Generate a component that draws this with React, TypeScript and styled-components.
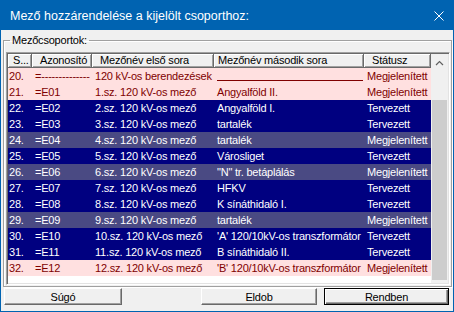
import styled, { createGlobalStyle } from 'styled-components'

const GlobalStyle = createGlobalStyle`
  html, body {
    margin: 0;
    padding: 0;
  }
  body {
    width: 454px;
    height: 312px;
    overflow: hidden;
    background: #f0f0f0;
  }
`

const StyledWindow = styled.div`
  width: 454px;
  height: 312px;
  box-sizing: border-box;
  border: 1px solid #0063b1;
  background: #f0f0f0;
  display: flex;
  flex-direction: column;
  font-family: 'Liberation Sans', Arial, sans-serif;
  font-size: 11px;
  letter-spacing: -0.2px;
  color: #000;
`
const StyledTitleBar = styled.div`
  height: 29px;
  flex: none;
  background: #0063b1;
  color: #fff;
  display: flex;
  align-items: center;
  justify-content: space-between;
  padding: 0 9px 0 9px;
  font-size: 12.5px;
  letter-spacing: 0;
`
const StyledClose = styled.svg`
  width: 10px;
  height: 10px;
`
const StyledGroup = styled.fieldset`
  margin: 4px 1px 0 2px;
  padding: 5px 1px 1px 2px;
  border: 1px solid #a0a0a0;
  box-shadow: inset 1px 1px #fff, 1px 1px #fff;
  min-width: 0;
`
const StyledLegend = styled.legend`
  margin-left: 4px;
  padding: 0 2px;
  line-height: 13px;
`
const StyledList = styled.div`
  height: 233px;
  box-sizing: border-box;
  border-style: solid;
  border-width: 1px;
  border-color: #a0a0a0 #fff #fff #a0a0a0;
  box-shadow: inset 1px 1px #696969, inset -1px -1px #e3e3e3;
  padding: 1px;
  display: flex;
  background: #fff;
`
const StyledTable = styled.div`
  width: 423px;
  display: flex;
  flex-direction: column;
`
const StyledRow = styled.div`
  display: grid;
  grid-template-columns: 24px 60px 122px 150px 67px;
  height: 16px;
  line-height: 16px;
`
const StyledHeaderRow = styled(StyledRow)`
  height: 14px;
  line-height: 13px;
`
const StyledHead = styled.div<{ $pad: number }>`
  box-sizing: border-box;
  padding-left: ${({ $pad }) => $pad}px;
  background: #f0f0f0;
  border-right: 1px solid #696969;
  border-bottom: 1px solid #696969;
  box-shadow: inset 1px 1px #fff, inset -1px -1px #a0a0a0;
  white-space: nowrap;
  overflow: hidden;
`
const tones = {
  pink: { bg: '#ffe0e0', fg: '#800000' },
  navy: { bg: '#000080', fg: '#ffffff' },
  slate: { bg: '#4a4a83', fg: '#ffffff' },
}
type Tone = keyof typeof tones

const StyledDataRow = styled(StyledRow)<{ $tone: Tone }>`
  background: ${({ $tone }) => tones[$tone].bg};
  color: ${({ $tone }) => tones[$tone].fg};
`
const StyledCell = styled.div<{ $first?: boolean }>`
  padding-left: ${({ $first }) => ($first ? 1 : 3)}px;
  white-space: nowrap;
  overflow: hidden;
`
const StyledRule = styled.div`
  height: 12px;
  margin-right: 1px;
  border-bottom: 1px solid currentColor;
`
const StyledScroll = styled.div`
  width: 17px;
  display: flex;
  flex-direction: column;
  background: #f0f0f0;
`
const StyledArrow = styled.div`
  height: 17px;
  display: flex;
  align-items: center;
  justify-content: center;
`
const StyledTrack = styled.div`
  height: 29px;
`
const StyledThumb = styled.div`
  flex: 1;
  margin: 0 1px 3px 1px;
  background: #cdcdcd;
`
const StyledButtons = styled.div`
  display: flex;
  gap: 7px;
  margin: 1px 4px 0 3px;
`
const StyledButton = styled.button<{ $width: number; $default?: boolean }>`
  width: ${({ $width }) => $width}px;
  height: 17px;
  padding: 0;
  box-sizing: border-box;
  font: inherit;
  letter-spacing: inherit;
  color: #000;
  background: #f0f0f0;
  border-style: solid;
  border-width: 1px;
  border-color: ${({ $default }) =>
    $default ? '#000' : '#fff #696969 #696969 #fff'};
  box-shadow: ${({ $default }) =>
    $default
      ? 'inset 1px 1px #fff, inset -1px -1px #696969, inset -2px -2px #a0a0a0'
      : 'inset -1px -1px #a0a0a0'};
  &:first-child {
    margin-right: auto;
  }
`

const rows: [string, string, string, string | null, string, Tone][] = [
  ['20.', '=--------------', '120 kV-os berendezések', null, 'Megjelenített', 'pink'],
  ['21.', '=E01', '1.sz. 120 kV-os mező', 'Angyalföld II.', 'Megjelenített', 'pink'],
  ['22.', '=E02', '2.sz. 120 kV-os mező', 'Angyalföld I.', 'Tervezett', 'navy'],
  ['23.', '=E03', '3.sz. 120 kV-os mező', 'tartalék', 'Tervezett', 'navy'],
  ['24.', '=E04', '4.sz. 120 kV-os mező', 'tartalék', 'Megjelenített', 'slate'],
  ['25.', '=E05', '5.sz. 120 kV-os mező', 'Városliget', 'Tervezett', 'navy'],
  ['26.', '=E06', '6.sz. 120 kV-os mező', '"N" tr. betáplálás', 'Megjelenített', 'slate'],
  ['27.', '=E07', '7.sz. 120 kV-os mező', 'HFKV', 'Tervezett', 'navy'],
  ['28.', '=E08', '8.sz. 120 kV-os mező', 'K sínáthidaló I.', 'Tervezett', 'navy'],
  ['29.', '=E09', '9.sz. 120 kV-os mező', 'tartalék', 'Megjelenített', 'slate'],
  ['30.', '=E10', '10.sz. 120 kV-os mező', "'A' 120/10kV-os transzformátor", 'Tervezett', 'navy'],
  ['31.', '=E11', '11.sz. 120 kV-os mező', 'B sínáthidaló II.', 'Tervezett', 'navy'],
  ['32.', '=E12', '12.sz. 120 kV-os mező', "'B' 120/10kV-os transzformátor", 'Megjelenített', 'pink'],
]

const headers: [string, number][] = [
  ['S...', 5],
  ['Azonosító', 8],
  ['Mezőnév első sora', 8],
  ['Mezőnév második sora', 4],
  ['Státusz', 8],
]

const App = () => {
  return (
    <>
      <GlobalStyle />
      <StyledWindow>
        <StyledTitleBar>
          <span>Mező hozzárendelése a kijelölt csoporthoz:</span>
          <StyledClose viewBox="0 0 10 10">
            <path d="M0.5 0.5 L9.5 9.5 M9.5 0.5 L0.5 9.5" stroke="#fff" strokeWidth="1" />
          </StyledClose>
        </StyledTitleBar>
        <StyledGroup>
          <StyledLegend>Mezőcsoportok:</StyledLegend>
          <StyledList>
            <StyledTable>
              <StyledHeaderRow>
                {headers.map(([label, pad]) => (
                  <StyledHead key={label} $pad={pad}>
                    {label}
                  </StyledHead>
                ))}
              </StyledHeaderRow>
              {rows.map(([no, id, first, second, status, tone]) => (
                <StyledDataRow key={no} $tone={tone}>
                  <StyledCell $first>{no}</StyledCell>
                  <StyledCell>{id}</StyledCell>
                  <StyledCell>{first}</StyledCell>
                  <StyledCell>{second ?? <StyledRule />}</StyledCell>
                  <StyledCell>{status}</StyledCell>
                </StyledDataRow>
              ))}
            </StyledTable>
            <StyledScroll>
              <StyledArrow>
                <svg width="9" height="6" viewBox="0 0 9 6">
                  <path d="M1 5 L4.5 1.5 L8 5" fill="none" stroke="#606060" strokeWidth="1.2" />
                </svg>
              </StyledArrow>
              <StyledTrack />
              <StyledThumb />
            </StyledScroll>
          </StyledList>
        </StyledGroup>
        <StyledButtons>
          <StyledButton $width={118}>Súgó</StyledButton>
          <StyledButton $width={116}>Eldob</StyledButton>
          <StyledButton $width={125} $default>
            Rendben
          </StyledButton>
        </StyledButtons>
      </StyledWindow>
    </>
  )
}

export default App
